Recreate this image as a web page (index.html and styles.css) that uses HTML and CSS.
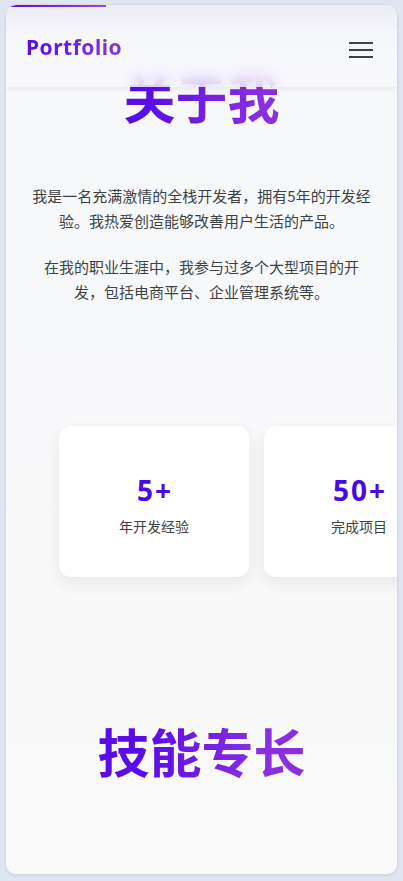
FILE: index.html
```html
<!DOCTYPE html>
<html lang="zh-CN">
<head>
<meta charset="utf-8">
<meta name="viewport" content="width=device-width, initial-scale=1">
<title>Portfolio</title>
<link rel="stylesheet" href="styles.css">
</head>
<body>
<div class="frame">
  <header class="header">
    <div class="progress"></div>
    <a class="logo" href="#">Portfolio</a>
    <button class="menu" aria-label="菜单">
      <span></span><span></span><span></span>
    </button>
  </header>
  <main class="content">
    <section class="about">
      <h2 class="title">关于我</h2>
      <p class="text">我是一名充满激情的全栈开发者，拥有5年的开发经验。我热爱创造能够改善用户生活的产品。</p>
      <p class="text">在我的职业生涯中，我参与过多个大型项目的开发，包括电商平台、企业管理系统等。</p>
      <div class="stats">
        <div class="card"><div class="num">5+</div><div class="label">年开发经验</div></div>
        <div class="card"><div class="num">50+</div><div class="label">完成项目</div></div>
      </div>
    </section>
    <section class="skills">
      <h2 class="title">技能专长</h2>
    </section>
  </main>
</div>
</body>
</html>
```

FILE: styles.css
```css
* { box-sizing: border-box; }
html, body { margin: 0; padding: 0; }
body {
  background: #dfe5f1;
  font-family: "Noto Sans", "Noto Sans CJK SC", sans-serif;
  width: 403px;
  height: 881px;
  overflow: hidden;
  padding: 4px 5px 6px 5px;
}
.frame {
  position: relative;
  height: 871px;
  border: 1px solid #d6d9e0;
  border-radius: 11px;
  overflow: hidden;
  background: linear-gradient(#f7f8fb, #f9f9f9);
  box-shadow: 0 1px 2px rgba(0,0,0,0.08);
}
.header {
  position: absolute;
  top: 0; left: 0; right: 0;
  height: 82px;
  z-index: 5;
  display: flex;
  align-items: center;
  justify-content: space-between;
  padding: 0 23px 0 20px;
  background: linear-gradient(rgba(232,234,244,0.8), rgba(246,246,251,0.78) 40%, rgba(248,248,252,0.75));
  backdrop-filter: blur(7px);
  -webkit-backdrop-filter: blur(7px);
  box-shadow: 0 2px 6px rgba(0,0,0,0.07);
}
.progress {
  position: absolute;
  top: 0; left: 3px;
  width: 97px; height: 2px;
  background: linear-gradient(90deg, #5a0ce6, #9b40ea);
}
.logo {
  font-family: "Noto Sans", sans-serif;
  font-weight: 700;
  font-size: 21px;
  letter-spacing: 0.5px;
  text-decoration: none;
  background: linear-gradient(90deg, #5a0ce6, #8a35e0);
  -webkit-background-clip: text;
  background-clip: text;
  color: transparent;
  margin-top: 2px;
}
.menu {
  border: 0;
  background: none;
  padding: 0;
  width: 24px;
  height: 16px;
  display: flex;
  flex-direction: column;
  justify-content: space-between;
  margin-top: 8px;
  margin-right: 1px;
}
.menu span {
  display: block;
  height: 2px;
  background: #3d4446;
}
.content { padding-top: 61px; }
.title {
  margin: 0;
  text-align: center;
  font-family: "Noto Sans CJK SC", sans-serif;
  font-weight: 700;
  font-size: 52px;
  line-height: 62px;
  background: linear-gradient(90deg, #5a0ce6 35%, #8a2fe0 65%);
  -webkit-background-clip: text;
  background-clip: text;
  color: transparent;
}
.text {
  margin: 0 24px;
  text-align: center;
  font-size: 15px;
  line-height: 25px;
  color: #3e4244;
  font-family: "Noto Sans CJK SC", sans-serif;
}
.about .title { margin-bottom: 55px; }
.text + .text { margin-top: 21px; }
.stats {
  display: flex;
  gap: 15px;
  padding-left: 53px;
  margin-top: 122px;
}
.card {
  flex: 0 0 190px;
  height: 151px;
  background: #fff;
  border-radius: 12px;
  box-shadow: 0 6px 16px rgba(40,40,60,0.08);
  display: flex;
  flex-direction: column;
  align-items: center;
  justify-content: center;
  padding-top: 4px;
}
.num {
  font-family: "Open Sans", "Noto Sans", sans-serif;
  font-weight: 700;
  font-size: 28px;
  line-height: 36px;
  letter-spacing: 2px;
  padding-left: 2px;
  color: #4a08e4;
}
.label {
  margin-top: 9px;
  font-size: 14px;
  line-height: 18px;
  color: #3e4244;
  font-family: "Noto Sans CJK SC", sans-serif;
}
.skills { padding-top: 143px; }
```
